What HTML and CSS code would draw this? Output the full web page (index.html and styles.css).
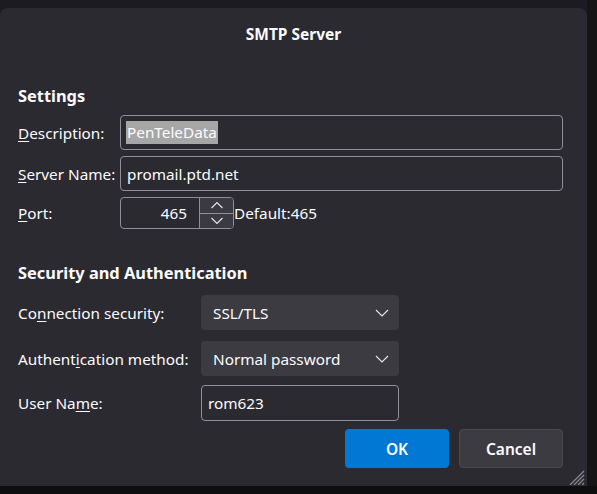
FILE: index.html
```html
<!DOCTYPE html>
<html>
<head>
<meta charset="utf-8">
<link rel="stylesheet" href="styles.css">
</head>
<body>
<div class="frame">
  <div class="dialog">
    <div class="title">SMTP Server</div>

    <div class="heading settings-heading">Settings</div>
    <div class="settings">
      <div class="row">
        <label class="lbl lbl-s"><u>D</u>escription:</label>
        <div class="field wide"><span class="sel">PenTeleData</span></div>
      </div>
      <div class="row">
        <label class="lbl lbl-s"><u>S</u>erver Name:</label>
        <div class="field wide">promail.ptd.net</div>
      </div>
      <div class="row row-port">
        <label class="lbl lbl-s"><u>P</u>ort:</label>
        <div class="spinner">
          <div class="spin-num">465</div>
          <div class="spin-btns">
            <div class="spin-btn"><svg width="14" height="8" viewBox="0 0 14 8"><path d="M1.5 7 L7 1.5 L12.5 7" fill="none" stroke="#e8e8ee" stroke-width="1.1"/></svg></div>
            <div class="spin-btn"><svg width="14" height="8" viewBox="0 0 14 8"><path d="M1.5 1 L7 6.5 L12.5 1" fill="none" stroke="#e8e8ee" stroke-width="1.1"/></svg></div>
          </div>
        </div>
        <span class="default">Default:465</span>
      </div>
    </div>

    <div class="heading security-heading">Security and Authentication</div>
    <div class="security">
      <div class="row row-sel">
        <label class="lbl lbl-l">Co<u>n</u>nection security:</label>
        <div class="select">SSL/TLS<svg class="chev" width="14" height="8" viewBox="0 0 14 8"><path d="M1 1 L7 7 L13 1" fill="none" stroke="#e8e8ee" stroke-width="1.1"/></svg></div>
      </div>
      <div class="row row-sel2">
        <label class="lbl lbl-l">Authent<u>i</u>cation method:</label>
        <div class="select">Normal password<svg class="chev" width="14" height="8" viewBox="0 0 14 8"><path d="M1 1 L7 7 L13 1" fill="none" stroke="#e8e8ee" stroke-width="1.1"/></svg></div>
      </div>
      <div class="row row-user">
        <label class="lbl lbl-l">User Na<u>m</u>e:</label>
        <div class="field user">rom623</div>
      </div>
    </div>

    <div class="buttons">
      <button class="btn ok">OK</button>
      <button class="btn cancel">Cancel</button>
    </div>

    <svg class="grip" width="18" height="16" viewBox="0 0 18 16">
      <path d="M17 2 L3 16 M17 6 L7 16 M17 10 L11 16 M17 14 L15 16" stroke="#8a8a90" stroke-width="1.2"/>
    </svg>
  </div>
  <div class="side"></div>
</div>
</body>
</html>
```

FILE: styles.css
```css
* { box-sizing: border-box; }
html, body {
  margin: 0;
  padding: 0;
  width: 597px;
  height: 494px;
  overflow: hidden;
}
body {
  background: #0e0e0e;
  font-family: "Noto Sans", "Open Sans", sans-serif;
  color: #fbfbfe;
}
.frame {
  display: flex;
  width: 597px;
  height: 486px;
  background: #1c1b21;
  padding-top: 8px;
}
.side {
  width: 10px;
  background: #151515;
  margin-top: -8px;
}
.dialog {
  position: relative;
  width: 587px;
  height: 478px;
  background: #2b2a31;
  border-radius: 8px 8px 0 0;
  padding: 16px 24px 0 18px;
  display: flex;
  flex-direction: column;
}
.title {
  text-align: center;
  font-weight: 700;
  font-size: 15.5px;
  line-height: 20px;
  margin-left: 6px;
}
.heading {
  font-weight: 700;
  font-size: 16.4px;
  line-height: 22px;
}
.settings-heading { margin-top: 41px; }
.settings { margin-top: 8px; display: flex; flex-direction: column; gap: 6px; }
.security-heading { margin-top: 33px; }
.security { margin-top: 11px; display: flex; flex-direction: column; }
.row { display: flex; align-items: center; }
.row-sel2 { margin-top: 11px; }
.row-user { margin-top: 9px; }
.lbl {
  font-size: 15.3px;
  flex: none;
}
.lbl u { text-underline-offset: 2px; text-decoration-thickness: 1px; }
.lbl-s { width: 102px; }
.lbl-l { width: 183px; }
.field {
  height: 35px;
  border: 1px solid #8f8f98;
  border-radius: 4px;
  background: #2b2a31;
  font-size: 15.3px;
  display: flex;
  align-items: center;
  padding-left: 6px;
}
.wide { width: 443px; }
.sel {
  background: #a6a6a6;
  color: #fbfbfe;
  padding: 1px 1px 2px 1px;
  margin-left: -1px;
}
.row-port { height: 32px; }
.spinner {
  display: flex;
  height: 32px;
  width: 114px;
  border: 1px solid #8f8f98;
  border-radius: 4px;
  overflow: hidden;
}
.spin-num {
  width: 78px;
  font-size: 15.3px;
  text-align: right;
  padding-right: 12px;
  line-height: 30px;
}
.spin-btns {
  flex: 1;
  display: flex;
  flex-direction: column;
  border-left: 1px solid #8f8f98;
}
.spin-btn {
  flex: 1;
  background: #3b3a41;
  display: flex;
  align-items: center;
  justify-content: center;
}
.spin-btn + .spin-btn { border-top: 1px solid #8f8f98; }
.default { font-size: 15.3px; margin-left: 0px; }
.select {
  width: 198px;
  height: 35px;
  background: #3c3b42;
  border-radius: 4px;
  font-size: 15.3px;
  display: flex;
  align-items: center;
  padding-left: 12px;
  position: relative;
}
.chev { position: absolute; right: 10px; top: 14px; }
.user { width: 198px; height: 36px; }
.buttons {
  margin-top: 8px;
  display: flex;
  justify-content: flex-end;
  gap: 10px;
}
.btn {
  width: 104px;
  height: 39px;
  border-radius: 4px;
  font-family: "Noto Sans", "Open Sans", sans-serif;
  font-size: 15.5px;
  font-weight: 600;
  color: #fbfbfe;
  border: 1px solid transparent;
}
.ok { background: #0078d4; }
.cancel { background: #3c3b42; border-color: #4a4950; }
.grip { position: absolute; right: 2px; bottom: 1px; }
```
